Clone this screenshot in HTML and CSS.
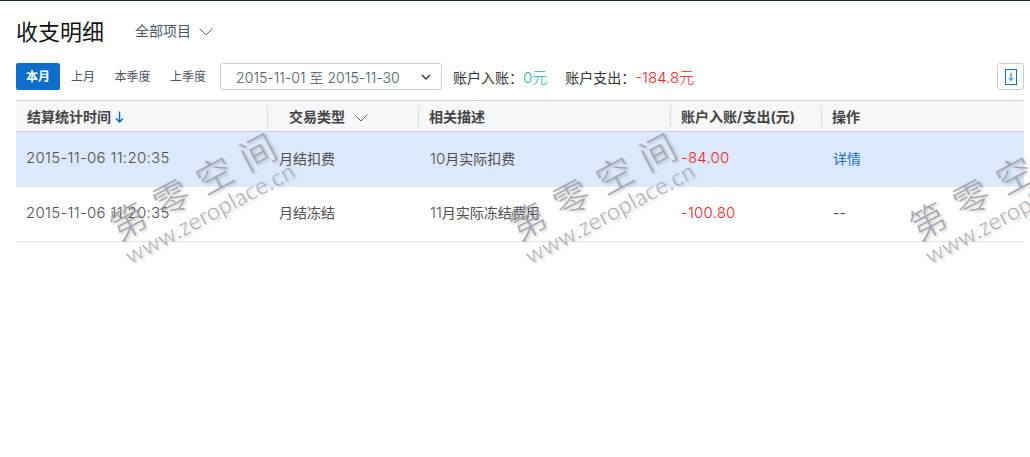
FILE: index.html
```html
<!DOCTYPE html>
<html>
<head>
    <title>收支明细</title>
    <link rel="stylesheet" href="styles.css">
</head>
<body>
    <div class="page">
        <div class="title-row">
            <h1>收支明细</h1>
            <div class="project-select">
                <span>全部项目</span>
                <svg class="chevron" width="14" height="8" viewBox="0 0 14 8"><path d="M0.5 0.5 L7 7 L13.5 0.5" fill="none" stroke="#5a6470" stroke-width="1"/></svg>
            </div>
        </div>

        <div class="filter-row">
            <a class="range-btn active">本月</a>
            <a class="range-btn">上月</a>
            <a class="range-btn">本季度</a>
            <a class="range-btn">上季度</a>
            <div class="date-picker">
                <span class="date-text">2015-11-01 至 2015-11-30</span>
                <svg width="10" height="6" viewBox="0 0 10 6"><path d="M1 1 L5 5 L9 1" fill="none" stroke="#333" stroke-width="1.4"/></svg>
            </div>
            <div class="summary">账户入账：<span class="income">0元</span></div>
            <div class="summary">账户支出：<span class="expense">-184.8元</span></div>
            <a class="export-btn">
                <svg width="12" height="16" viewBox="0 0 12 16"><rect x="0.5" y="0.5" width="11" height="15" fill="none" stroke="#0d6fc9"/><path d="M6 3.5 V11.5 M3.5 9 L6 11.5 L8.5 9" fill="none" stroke="#0d6fc9"/></svg>
            </a>
        </div>

        <table class="bill-table">
            <colgroup>
                <col class="col-first">
                <col class="col-narrow">
                <col class="col-wide">
                <col class="col-narrow">
                <col>
            </colgroup>
            <thead>
                <tr>
                    <th><span class="th-inner">结算统计时间
                        <svg class="sort-arrow" width="9" height="12" viewBox="0 0 9 12"><path d="M4.5 0.5 V11 M1 7.5 L4.5 11 L8 7.5" fill="none" stroke="#0d6fc9" stroke-width="1.5"/></svg>
                    </span></th>
                    <th><span class="th-inner th-type">交易类型
                        <svg class="type-chevron" width="14" height="8" viewBox="0 0 14 8"><path d="M0.5 0.5 L7 7 L13.5 0.5" fill="none" stroke="#5a6470" stroke-width="1"/></svg>
                    </span></th>
                    <th><span class="th-inner">相关描述</span></th>
                    <th><span class="th-inner">账户入账/支出(元)</span></th>
                    <th><span class="th-inner">操作</span></th>
                </tr>
            </thead>
            <tbody>
                <tr class="selected">
                    <td class="num time">2015-11-06 11:20:35</td>
                    <td>月结扣费</td>
                    <td><span class="num">10</span>月实际扣费</td>
                    <td class="num amount">-84.00</td>
                    <td><a class="link">详情</a></td>
                </tr>
                <tr>
                    <td class="num time">2015-11-06 11:20:35</td>
                    <td>月结冻结</td>
                    <td><span class="num">11</span>月实际冻结费用</td>
                    <td class="num amount">-100.80</td>
                    <td>--</td>
                </tr>
            </tbody>
        </table>

        <div class="watermark wm-1"><div class="wm-name">第零空间</div><div class="wm-url">www.zeroplace.cn</div></div>
        <div class="watermark wm-2"><div class="wm-name">第零空间</div><div class="wm-url">www.zeroplace.cn</div></div>
        <div class="watermark wm-3"><div class="wm-name">第零空间</div><div class="wm-url">www.zeroplace.cn</div></div>
    </div>
</body>
</html>
```

FILE: styles.css
```css
html, body {
    margin: 0;
    padding: 0;
    height: 457px;
    overflow: hidden;
    background-color: #ffffff;
}

body {
    font-family: "Inter", "Noto Sans CJK SC", sans-serif;
    font-size: 14px;
    color: #4a4a4a;
}

.page {
    position: relative;
    height: 456px;
    border-top: 1px solid #1f2a3a;
    padding: 0 6px 0 16px;
    overflow: hidden;
}

/* Title */
.title-row {
    display: flex;
    align-items: center;
    height: 58px;
    padding-bottom: 4px;
}

h1 {
    margin: 0;
    font-size: 22px;
    font-weight: 400;
    color: #111111;
    width: 119px;
}

.project-select {
    display: flex;
    align-items: center;
    gap: 8px;
    color: #4b5662;
}

.chevron {
    margin-top: 3px;
}

/* Filters */
.filter-row {
    display: flex;
    align-items: center;
    height: 27px;
}

.range-btn {
    height: 27px;
    line-height: 27px;
    padding: 0 9.5px 0 10px;
    font-size: 12px;
    color: #4b5662;
    border-radius: 2px;
    white-space: nowrap;
}

.range-btn.active {
    box-sizing: border-box;
    width: 44px;
    margin-right: 1px;
    padding: 0;
    text-align: center;
    background-color: #0d6fc9;
    color: #ffffff;
    font-weight: 700;
}

.date-picker {
    box-sizing: border-box;
    width: 222px;
    height: 27px;
    margin-left: 4.5px;
    margin-right: 11px;
    padding: 0 10px 0 15px;
    display: flex;
    align-items: center;
    justify-content: space-between;
    border: 1px solid #c8ced6;
    border-radius: 3px;
    color: #4b5662;
}

.date-text {
    font-weight: 300;
    letter-spacing: 0.05px;
}

.summary {
    color: #333333;
    margin-right: 18px;
    white-space: nowrap;
}

.income {
    color: #1fb8a0;
    font-weight: 300;
    font-size: 15px;
}

.expense {
    color: #ff2020;
    font-weight: 300;
    font-size: 15px;
}

.export-btn {
    box-sizing: border-box;
    width: 27px;
    height: 27px;
    margin-left: auto;
    display: flex;
    align-items: center;
    justify-content: center;
    border: 1px solid #c8ced6;
    border-radius: 3px;
}

/* Table */
.bill-table {
    width: 1008px;
    margin-top: 10px;
    border-collapse: collapse;
    table-layout: fixed;
}

.col-first {
    width: 251px;
}

.col-wide {
    width: 252px;
}

.col-narrow {
    width: 151px;
}

.bill-table th {
    height: 30px;
    padding: 0;
    background-color: #f6f7f9;
    border-top: 1px solid #cfd4da;
    border-bottom: 1px solid #cfd4da;
    text-align: left;
    font-size: 14px;
    font-weight: 700;
    color: #444444;
}

.th-inner {
    display: flex;
    align-items: center;
    height: 21px;
    padding-left: 10px;
    border-left: 1px solid #d8dce1;
}

th:first-child .th-inner {
    border-left: none;
    padding-left: 11px;
}

.th-type {
    padding-left: 21px;
}

.sort-arrow {
    margin-left: 4px;
    margin-top: 1px;
}

.type-chevron {
    margin-left: 9px;
    margin-top: 3px;
}

.bill-table td {
    height: 50px;
    padding: 0 0 4px 12px;
    border-bottom: 1px solid #e4e6e9;
    color: #4f4f4f;
}

.selected td {
    height: 51px;
    background-color: #dce9fc;
    border-bottom: none;
}

.num {
    font-size: 15px;
    font-weight: 300;
}

.bill-table td.time {
    padding-left: 10px;
    letter-spacing: 0.3px;
}

.bill-table td.amount {
    padding-left: 11px;
    color: #ff2020;
    letter-spacing: 0.2px;
}

.link {
    color: #1a6fc9;
}

/* Watermark */
.watermark {
    position: absolute;
    top: 200px;
    width: 220px;
    transform: rotate(-28deg);
    transform-origin: 0 100%;
    color: #a3a8ae;
    text-shadow: 1px 2px 3px rgba(0, 0, 0, 0.22);
    pointer-events: none;
}

.wm-1 {
    left: 132px;
}

.wm-2 {
    left: 532px;
}

.wm-3 {
    left: 932px;
}

.wm-name {
    font-family: "Noto Sans CJK SC", sans-serif;
    font-size: 36px;
    line-height: 42px;
    font-weight: 300;
    letter-spacing: 13px;
    white-space: nowrap;
}

.wm-url {
    font-family: "Lato", sans-serif;
    font-size: 23px;
    line-height: 24px;
    font-weight: 300;
    letter-spacing: 0.5px;
    white-space: nowrap;
}
```
